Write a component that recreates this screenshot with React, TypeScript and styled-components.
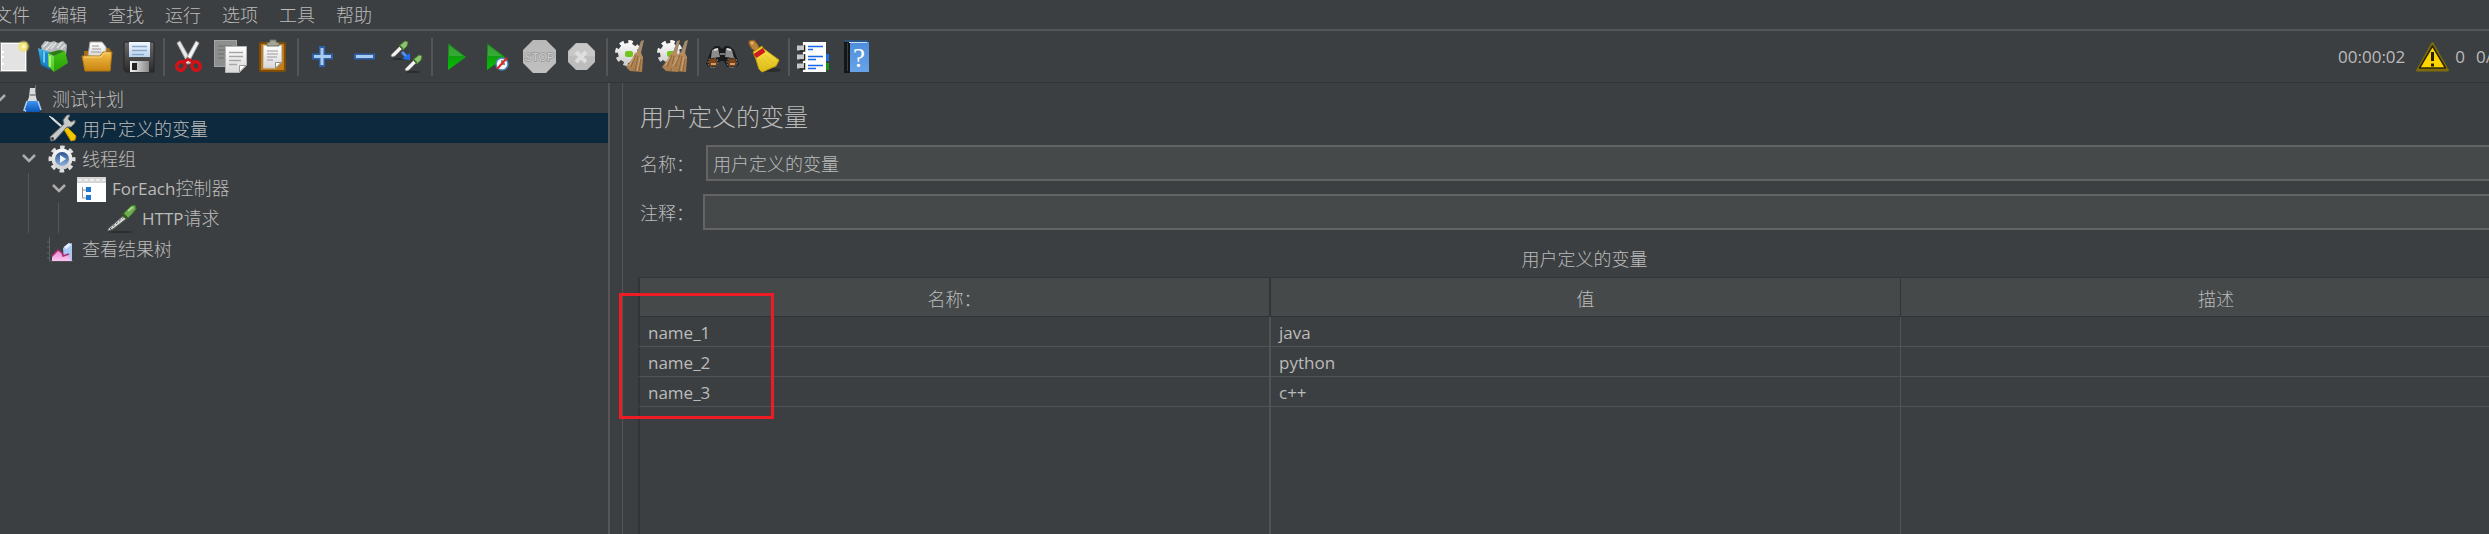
import React from "react";
import styled, { createGlobalStyle } from "styled-components";

const color = {
  bg: "#3c3f41",
  text: "#bbbbbb",
  line: "#555555",
  dark: "#323537",
  grid: "#515456",
  raised: "#45494a",
  field: "#646464",
  selected: "#0d293e",
  mark: "#ed1c24",
};

const GlobalStyle = createGlobalStyle`
  * { box-sizing: border-box; }
  body {
    margin: 0;
    background: ${color.bg};
    color: ${color.text};
    font-family: "Noto Sans CJK SC", sans-serif;
    font-size: 18px;
    font-weight: 300;
    line-height: 26px;
  }
  button, input { font: inherit; color: inherit; }
`;

const Window = styled.div`
  display: flex;
  flex-direction: column;
  min-height: 100vh;
  overflow: hidden;
`;

const MenuBar = styled.nav`
  display: flex;
  gap: 21px;
  height: 31px;
  margin-left: -6px;
  border-bottom: 2px solid ${color.line};
`;

const MenuButton = styled.button`
  padding: 0 0 2px;
  border: 0;
  background: none;
  white-space: nowrap;
`;

const ToolBar = styled.header`
  display: flex;
  align-items: center;
  height: 52px;
  margin-left: -8px;
  border-bottom: 1px solid ${color.dark};
`;

const ToolButton = styled.button`
  display: flex;
  flex: none;
  justify-content: center;
  width: 42px;
  height: 36px;
  padding: 0;
  border: 0;
  background: none;
`;

const Separator = styled.span<{ $narrow?: boolean }>`
  flex: none;
  width: 2px;
  height: 38px;
  margin: 0 ${(p) => (p.$narrow ? 2 : 3)}px;
  background: ${color.line};
`;

const Status = styled.div`
  display: flex;
  align-items: center;
  gap: 11px;
  margin: 0 -3px 0 auto;
  white-space: nowrap;
`;

const Warnings = styled.span`
  display: flex;
  align-items: center;
  gap: 6px;
`;

const Latin = styled.span`
  font-family: "Open Sans", "Noto Sans", sans-serif;
  font-size: 17px;
  font-weight: 400;
`;

const Workspace = styled.div`
  display: flex;
  flex: 1;
`;

const Tree = styled.ul`
  flex: none;
  width: 617px;
  margin: 0 0 0 -9px;
  padding: 0;
  list-style: none;
`;

const TreeRow = styled.li<{ $selected?: boolean }>`
  display: flex;
  align-items: center;
  height: 30px;
  background: ${(p) => (p.$selected ? color.selected : "none")};
  white-space: nowrap;
`;

const Indent = styled.span<{ $guide: boolean }>`
  width: 23px;
  height: 30px;
  margin-left: 7px;
  border-left: 1px solid ${(p) => (p.$guide ? color.line : "transparent")};
`;

const Twisty = styled.span`
  display: flex;
  justify-content: center;
  width: 16px;
  margin-right: 10px;
`;

const TreeIcon = styled.span`
  display: flex;
  width: 30px;
  margin-right: 5px;
`;

const Divider = styled.div`
  flex: none;
  width: 14px;
  border-left: 2px solid ${color.line};
`;

const Editor = styled.main`
  display: flex;
  flex: 1;
  flex-direction: column;
  min-width: 0;
  margin-right: -42px;
  padding: 15px 0 0 15px;
  border-left: 1px solid ${color.line};
`;

const Title = styled.h1`
  margin: 0 0 11px 2px;
  font-size: 24px;
  font-weight: 300;
  line-height: 36px;
`;

const Field = styled.div<{ $gap: number }>`
  display: flex;
  align-items: center;
  gap: ${(p) => p.$gap}px;
  margin: 0 0 13px 2px;
`;

const FieldLabel = styled.label`
  flex: none;
  width: 54px;
`;

const TextInput = styled.input`
  flex: 1;
  min-width: 0;
  height: 36px;
  padding: 0 5px;
  border: 2px solid ${color.field};
  border-radius: 0;
  outline: 0;
  background: ${color.raised};
`;

const TableCaption = styled.h2`
  margin: 2px 0 6px;
  font-size: 18px;
  font-weight: 300;
  line-height: 26px;
  text-align: center;
`;

const TableArea = styled.section`
  position: relative;
  display: grid;
  flex: 1;
`;

const Table = styled.table`
  width: 100%;
  height: 100%;
  border-collapse: separate;
  border-spacing: 0;
  table-layout: fixed;
`;

const HeadCell = styled.th`
  height: 40px;
  padding: 2px 0 0;
  border: solid ${color.dark};
  border-width: 1px 0 1px 2px;
  background: ${color.raised};
  font-weight: 300;

  &:last-child { border-left-width: 1px; }
`;

const Cell = styled.td`
  height: 30px;
  padding: 0 0 0 8px;
  border: solid ${color.grid};
  border-width: 0 0 1px 2px;
  line-height: 24px;

  &:first-child { border-left-color: ${color.dark}; }
  &:last-child { border-left-width: 1px; }
`;

const FillCell = styled(Cell)`
  height: auto;
  border-bottom: 0;
`;

const Highlight = styled.div`
  position: absolute;
  top: 16px;
  left: -19px;
  width: 155px;
  height: 126px;
  border: 3px solid ${color.mark};
  pointer-events: none;
`;

const DefsHolder = styled.svg`
  position: absolute;
`;

const Gradient = ({ id, from, to, flat }: { id: string; from: string; to: string; flat?: boolean }) => (
  <linearGradient id={id} x1="0" y1="0" x2={flat ? 1 : 0} y2={flat ? 0 : 1}>
    <stop offset="0" stopColor={from} />
    <stop offset="1" stopColor={to} />
  </linearGradient>
);

const IconDefs = () => (
  <DefsHolder width="0" height="0" aria-hidden>
    <defs>
      <Gradient id="paper" from="#ffffff" to="#d8d8d8" />
      <Gradient id="folder" from="#f3c04a" to="#c98310" />
      <Gradient id="blueBox" from="#3cb4ec" to="#0a64a8" />
      <Gradient id="greenBox" from="#3fc414" to="#2c9c06" />
      <Gradient id="greenSide" from="#7de35a" to="#4bc41c" />
      <Gradient id="floppy" from="#6a6a6a" to="#2a2a2a" />
      <Gradient id="sky" from="#f2f8ff" to="#b9d3ee" />
      <Gradient id="metal" from="#f4f4f4" to="#888888" flat />
      <Gradient id="play" from="#1d7a1d" to="#00c400" />
      <Gradient id="grey" from="#b8b8b8" to="#c0c0c0" />
      <Gradient id="gear" from="#fafafa" to="#cfcfcf" />
      <Gradient id="straw" from="#b98d5e" to="#a87c4d" />
      <Gradient id="yellow" from="#f8e34c" to="#dcb910" />
      <Gradient id="book" from="#4d8ddb" to="#68a3e8" />
      <Gradient id="liquid" from="#3f93ee" to="#0a56b8" />
      <Gradient id="lens" from="#2d528f" to="#8fb2de" />
      <Gradient id="pink" from="#e58bd0" to="#fbc4f2" />
      <radialGradient id="glow">
        <stop offset="0" stopColor="#fffde0" />
        <stop offset="0.5" stopColor="#f3e36a" />
        <stop offset="1" stopColor="#f3e36a" stopOpacity="0" />
      </radialGradient>
    </defs>
  </DefsHolder>
);

const Svg = ({ size = 36, children }: { size?: number; children: React.ReactNode }) => (
  <svg width={size} height={size} viewBox={`0 0 ${size} ${size}`} fill="none" aria-hidden>
    {children}
  </svg>
);

const NewIcon = () => (
  <Svg>
    <rect x="5.5" y="3.5" width="26" height="29" fill="#fff" stroke="#8b8b88" />
    <rect x="7" y="5" width="23" height="26" fill="#e3e3e3" />
    <path d="M7 13h2M7 18h2M7 25h2" stroke="#fff" strokeWidth="2" />
    <circle cx="28.500" cy="7.500" r="6.500" fill="url(#glow)" />
  </Svg>
);

const TemplatesIcon = () => (
  <Svg>
    <path d="M4 7 8 2l6 1 3-1 4 2 5-2 4 4-1 10-12 3L5 13z" fill="#b4b8b9" />
    <path d="m6 8 5-5M9 11l7-7M14 10l5-6M20 9l5-6M24 10l4-4" stroke="#e2e4e4" strokeWidth="1.500" />
    <path d="M1 9l5 2 7 2v18l-9-5z" fill="url(#blueBox)" />
    <path d="M5 12l7 3v13l-6-3z" fill="#1e86ca" />
    <path d="m6 12 2 1v11l-2-1z" fill="#6acbf4" />
    <path d="m11 14 6 3v16l-6-6z" fill="url(#greenSide)" />
    <path d="m17 17 11-5 3 12-14 9z" fill="url(#greenBox)" />
    <path d="m11 14 11-3 6 1-11 5z" fill="#2d7d14" />
    <path d="M13 17v11" stroke="#a6f088" strokeWidth="2" />
  </Svg>
);

const OpenIcon = () => (
  <Svg>
    <path d="M5 12h5l1-3h19l2 3v19H5z" fill="#a86c10" />
    <path d="m9 17 2-14h12l4 5v10z" fill="url(#paper)" stroke="#a9a9a9" />
    <path d="M13 7h7M13 10h9M12 13h10" stroke="#999" />
    <path d="M3 17h18l3-4h9l-2 19H6z" fill="url(#folder)" stroke="#b3770f" />
    <path d="M5 18h17l3-4h6" stroke="#fbd983" />
  </Svg>
);

const SaveIcon = () => (
  <Svg>
    <path d="M4 3h28l1 1v29H5l-2-2V4z" fill="url(#floppy)" stroke="#252525" />
    <path d="M8 3h21v15H8z" fill="url(#sky)" />
    <path d="M11 7.500h15M11 11.500h15M11 15.500h12" stroke="#8aa9c9" strokeWidth="1.500" />
    <rect x="9" y="22" width="19" height="11" fill="url(#metal)" />
    <rect x="11" y="24" width="5" height="7" fill="#222" />
  </Svg>
);

const CutIcon = () => (
  <Svg>
    <path d="M6 4 9 2l9 16 2 6-3 1z" fill="#e9e9e9" stroke="#a4a4a4" />
    <path d="m28 4-3-2-9 16-2 6 3 1z" fill="#f4f4f4" stroke="#a4a4a4" />
    <ellipse cx="10" cy="27" rx="4" ry="4.500" stroke="#d31217" strokeWidth="3.500" transform="rotate(35 10 27)" />
    <ellipse cx="25" cy="27" rx="4" ry="4.500" stroke="#d31217" strokeWidth="3.500" transform="rotate(-35 25 27)" />
    <path d="m13 23 4-3 5 3" stroke="#d31217" strokeWidth="3" />
    <circle cx="17" cy="19" r="1" fill="#777" />
  </Svg>
);

const CopyIcon = () => (
  <Svg>
    <rect x="1.500" y="1.500" width="22" height="26" fill="#8d8f8f" stroke="#a5a5a5" />
    <path d="M5 7h14M5 11h9M5 15h6M5 19h6" stroke="#6d6f6f" />
    <path d="M12.500 7.500h21V26l-7 7.500h-14z" fill="url(#paper)" stroke="#b5b5b5" />
    <path d="M16 13.500h14M16 17.500h14M16 21.500h12M16 25.500h8" stroke="#a6a6a6" strokeWidth="1.500" />
    <path d="M26.500 33v-6.500H33z" fill="#fff" stroke="#999" />
  </Svg>
);

const PasteIcon = () => (
  <Svg>
    <rect x="5" y="4" width="25" height="28" rx="1" fill="#c07f1c" stroke="#7d4c08" strokeWidth="2" />
    <path d="M8.500 6.500h18V23l-6 6h-12z" fill="url(#paper)" stroke="#c8c8c8" />
    <path d="M12 12h11M12 15h11M12 18h10M12 21h6" stroke="#999" />
    <path d="M20.500 29v-5.500H26z" fill="#fff" stroke="#8c8c8c" />
    <path d="M12 7V4l3-1V1h6v2l3 1v3z" fill="#a4a596" stroke="#6f705f" />
  </Svg>
);

const PlusIcon = () => (
  <Svg>
    <path d="M17 7v21M7 17.500h21" stroke="#2c62ac" strokeWidth="6" />
    <path d="M17 9v17M9 17.500h17" stroke="#a9cbee" strokeWidth="3" />
  </Svg>
);

const MinusIcon = () => (
  <Svg>
    <path d="M7 17.500h21" stroke="#2c62ac" strokeWidth="6" />
    <path d="M9 17.500h17" stroke="#a9cbee" strokeWidth="3" />
  </Svg>
);

const Dropper = () => (
  <>
    <path d="m1 16 9-9 3 2-8 8-3 1z" fill="#f2f2ee" stroke="#8f918f" strokeWidth="0.800" />
    <path d="m9 7 6-5 3 1-1 4-4 4z" fill="#8cc472" stroke="#47802f" strokeWidth="0.800" />
    <path d="m9 6 4 4" stroke="#3e6b2a" strokeWidth="1.500" />
  </>
);

const ToggleIcon = () => (
  <Svg>
    <ellipse cx="10" cy="20" rx="7" ry="1" fill="#292b2c" />
    <g transform="translate(1 0)"><Dropper /></g>
    <ellipse cx="24" cy="33" rx="7" ry="1" fill="#292b2c" />
    <g transform="translate(15 14)"><Dropper /></g>
    <path d="m13 13 5 5" stroke="#4d8df5" strokeWidth="3" />
    <path d="m21 14 0 7-8-1z" fill="#1f6fef" />
  </Svg>
);

const PlayIcon = () => (
  <Svg>
    <path d="M9 4v27l18-13z" fill="url(#play)" />
    <path d="M10 6v11l14 0z" fill="#5cb85c" opacity="0.500" />
  </Svg>
);

const PlayNoPauseIcon = () => (
  <Svg>
    <path d="M6 4v27l18-13z" fill="url(#play)" />
    <path d="M7 6v11l14 0z" fill="#5cb85c" opacity="0.500" />
    <circle cx="21" cy="25" r="6" fill="#f5f5f5" stroke="#4a86bd" strokeWidth="1.500" />
    <path d="M21 21v4h3" stroke="#222" />
    <path d="m16 30 10-11" stroke="#e02626" strokeWidth="2" />
  </Svg>
);

const StopIcon = () => (
  <Svg>
    <path d="M10 1h13l10 10v13L23 34H10L0 24V11z" fill="url(#grey)" />
    <text x="16.500" y="22" textAnchor="middle" fontFamily="Liberation Sans, sans-serif" fontSize="11" fill="#d0d0d0" stroke="#9a9a9a" strokeWidth="1.500" paintOrder="stroke">
      STOP
    </text>
  </Svg>
);

const ShutdownIcon = () => (
  <Svg>
    <path d="M11 4h11l8 8v11l-8 8H11l-8-8V12z" fill="#bdbdbd" />
    <path d="M11 5h11l8 8v4H4v-4z" fill="#c8c8c8" />
    <path d="m11 13 10 10M21 13 11 23" stroke="#dedede" strokeWidth="4" />
  </Svg>
);

const Cog = () => (
  <>
    <circle cx="15" cy="14" r="11" stroke="url(#gear)" strokeWidth="4" strokeDasharray="4.300 4.340" />
    <circle cx="15" cy="14" r="10" fill="url(#gear)" />
    <rect x="12" y="12" width="8" height="6" rx="2" fill="#72c51c" />
  </>
);

const Brush = ({ x }: { x: number }) => (
  <g transform={`translate(${x} 0)`}>
    <path d="m22 2 3-1-3 13-4-1z" fill="#a58a6b" />
    <path d="m16 14 5-2 3 6-1 15-12-1-4-4 6-8z" fill="url(#straw)" />
    <path d="m17 16-5 12M19 17l-3 15M22 20l-2 12" stroke="#8c6538" />
    <path d="m15 18-5 9M21 18l-3 14" stroke="#cda677" />
  </g>
);

const ClearIcon = () => (
  <Svg>
    <Cog />
    <Brush x={6} />
  </Svg>
);

const ClearAllIcon = () => (
  <Svg>
    <Cog />
    <Brush x={0} />
    <Brush x={8} />
  </Svg>
);

const SearchIcon = () => (
  <Svg>
    <path d="M1 25 6 11l4-4h4l3 3 3-3h4l5 4 5 14-3 3h-9l-3-6h-4l-3 6H4z" fill="#1a1a1a" />
    <path d="m7 11 6-2 2 9-9 1zM21 9l6 2 2 8-9-1z" fill="#8b8d8e" />
    <path d="m9 11 4-1M22 10l4 1" stroke="#dcdcdc" strokeWidth="2" />
    <path d="M15 15h5" stroke="#777" strokeWidth="2" />
    <circle cx="8" cy="23.500" r="5" stroke="#8e8e8e" strokeDasharray="2 1" />
    <circle cx="27" cy="23.500" r="5" stroke="#8e8e8e" strokeDasharray="2 1" />
    <circle cx="8" cy="23.500" r="4" fill="#7c4419" />
    <circle cx="27" cy="23.500" r="4" fill="#7c4419" />
    <path d="M6 25h5M25 25h5" stroke="#d09a68" strokeWidth="2" />
  </Svg>
);

const BroomIcon = () => (
  <Svg>
    <ellipse cx="25" cy="31" rx="9" ry="2" fill="#2b2d2e" />
    <path d="m2 2 5-1 4 5 2 6-3 1-5-3-3-5z" fill="#b9853a" stroke="#8a5c1d" />
    <circle cx="5" cy="4" r="1.500" fill="#e7b569" />
    <path d="m6 13 9-6 2 4-9 7z" fill="#ecd535" stroke="#b3940d" />
    <path d="m8 17 9-7 15 11-3 6-14 6-3-3z" fill="url(#yellow)" stroke="#c3a112" />
    <path d="m12 20 6 12M15 18l8 11M18 16l10 10" stroke="#e0c228" />
    <path d="m8 17 9-6" stroke="#d01c1c" strokeWidth="5" />
  </Svg>
);

const FunctionIcon = () => (
  <Svg>
    <rect x="27" y="15" width="7" height="7" fill="#1c6fe0" />
    <rect x="27" y="24" width="7" height="7" fill="#159415" />
    <path d="M7 3h24v30H7z" fill="#fdfdfd" />
    <path d="M7.500 3v30" stroke="#4a4c4d" />
    <path d="M2 9h6M2 18h6M2 27h6" stroke="#c4c7c9" strokeWidth="5" />
    <path d="M9.500 6v6h-5M9.500 15v6h-5M9.500 24v6h-5" stroke="#222" strokeWidth="1.500" />
    <path d="M13 7.500h15M13 17.500h15M13 26.500h15M13 10.500h5M13 20.500h8M13 29.500h8" stroke="#1767e8" strokeWidth="1.500" />
  </Svg>
);

const HelpIcon = () => (
  <Svg>
    <path d="M12 3h20v30H12z" fill="url(#book)" />
    <path d="M7 3h6v31H7z" fill="#141516" />
    <path d="M10.500 4v28" stroke="#3a3d40" />
    <path d="M8 2h23" stroke="#29527f" strokeWidth="2" />
    <path d="M12 3.500h18" stroke="#c9dcf2" />
    <text x="22" y="28" textAnchor="middle" fontFamily="Liberation Serif, serif" fontSize="27" fill="#ffffff">
      ?
    </text>
  </Svg>
);

const WarningIcon = () => (
  <svg width="33" height="30" viewBox="0 0 33 30" fill="none" aria-hidden>
    <path d="M16.500 1 32 28.500H1z" fill="#7c6c0c" stroke="#7c6c0c" strokeWidth="2" strokeLinejoin="round" />
    <path d="M16.500 4 29.500 26H3.500z" fill="#fdd400" stroke="#2b260b" strokeWidth="1.500" strokeLinejoin="round" />
    <path d="M16.500 10v9M16.500 21.500v3" stroke="#221d05" strokeWidth="3" />
  </svg>
);

const FlaskIcon = () => (
  <Svg size={30}>
    <path d="M18.500 2v5" stroke="#777" />
    <ellipse cx="16" cy="29" rx="9" ry="1" fill="#292b2c" />
    <path d="M13 5h5l1 9 4 13-2 2H9l-2-2 5-13z" fill="#d9dcde" />
    <path d="m10 18 11 0 3 9-2 2H9l-2-2z" fill="url(#liquid)" />
    <path d="m10 18-3 9 2 1M21 18l3 9" stroke="#a8cdf2" strokeWidth="1.500" />
    <path d="M13 12h6" stroke="#929697" strokeWidth="2" />
  </Svg>
);

const ToolsIcon = () => (
  <Svg size={30}>
    <path d="m2 3 4 2 9 8-1 1L5 6z" fill="#eee" stroke="#cfcfcf" />
    <path d="m16 15 3-2 10 10-1 4-4 1z" fill="#f3c600" stroke="#b58e00" />
    <path d="m3 24 14-13-1-4 4-5 3 0-2 4 3 3 4-2 0 3-4 4-4 0L8 27l-4 1z" fill="#c7c9c9" stroke="#66696a" />
    <circle cx="5.500" cy="25.500" r="1.500" fill="#3b3e40" />
  </Svg>
);

const ThreadGroupIcon = () => (
  <Svg size={30}>
    <circle cx="15" cy="16" r="11.500" stroke="#dedede" strokeWidth="4" strokeDasharray="4.520 4.510" strokeDashoffset="2.260" />
    <circle cx="15" cy="16" r="10.500" fill="url(#gear)" />
    <circle cx="15" cy="16" r="7" fill="url(#lens)" />
    <path d="M13 12v8l6-4z" fill="#eaf1fa" />
  </Svg>
);

const ControllerIcon = () => (
  <Svg size={30}>
    <path d="M0 4h29v25H0z" fill="#fff" />
    <path d="M0 4h29v6H0z" fill="#d5d5d5" />
    <path d="M1 7h27" stroke="#eee" strokeWidth="2" strokeDasharray="4 2" />
    <path d="M5.500 14v11h4M5.500 17h4" stroke="#8e9296" />
    <rect x="9" y="14" width="5" height="5" fill="#1c78cc" />
    <rect x="9" y="22" width="5" height="5" fill="#1c78cc" />
  </Svg>
);

const SamplerIcon = () => (
  <Svg size={30}>
    <ellipse cx="14" cy="29" rx="12" ry="1" fill="#2b2d2e" />
    <path d="m1 26 15-13 3 3L6 26l-5 2z" fill="#d6d8d2" stroke="#5f6261" />
    <path d="m3 26 14-12" stroke="#4a4d4c" strokeDasharray="2 2" />
    <path d="m16 11 8-8 4-1 1 4-4 5-5 5z" fill="#6faa52" stroke="#3f7a2a" />
    <path d="m21 8 5-4" stroke="#a7d68d" strokeWidth="2" />
    <path d="m15 10 6 6" stroke="#2f5c1f" strokeWidth="2" />
  </Svg>
);

const ResultsIcon = () => (
  <Svg size={30}>
    <path d="M2.500 4v24H26M0 9h3M0 14h3M0 20h3M0 25h3" stroke="#5d6062" />
    <path d="m17 28-1-13 5-4 4-1v18z" fill="#a9c9f5" />
    <path d="M18 15l5-4" stroke="#e4f0ff" strokeWidth="3" />
    <path d="M5 28v-4l6-7 4 3 1 3 6-1 2 6z" fill="url(#pink)" />
    <path d="m5 23 6-6 4 3 1 3 6-2" stroke="#b02a74" strokeWidth="1.500" />
  </Svg>
);

const Chevron = () => (
  <svg width="16" height="12" viewBox="0 0 16 12" fill="none" aria-hidden>
    <path d="m2 3 6 6 6-6" stroke="#adadad" strokeWidth="2.500" />
  </svg>
);

type Tool = { label: string; icon: React.FC };

const toolGroups: { tools: Tool[]; narrow?: boolean }[] = [
  {
    tools: [
      { label: "新建", icon: NewIcon },
      { label: "模板", icon: TemplatesIcon },
      { label: "打开", icon: OpenIcon },
      { label: "保存", icon: SaveIcon },
    ],
  },
  {
    tools: [
      { label: "剪切", icon: CutIcon },
      { label: "复制", icon: CopyIcon },
      { label: "粘贴", icon: PasteIcon },
    ],
  },
  {
    tools: [
      { label: "展开", icon: PlusIcon },
      { label: "折叠", icon: MinusIcon },
      { label: "切换", icon: ToggleIcon },
    ],
  },
  {
    narrow: true,
    tools: [
      { label: "启动", icon: PlayIcon },
      { label: "不停顿启动", icon: PlayNoPauseIcon },
      { label: "停止", icon: StopIcon },
      { label: "关闭", icon: ShutdownIcon },
    ],
  },
  {
    tools: [
      { label: "清除", icon: ClearIcon },
      { label: "清除全部", icon: ClearAllIcon },
    ],
  },
  {
    narrow: true,
    tools: [
      { label: "搜索", icon: SearchIcon },
      { label: "重置搜索", icon: BroomIcon },
    ],
  },
  {
    tools: [
      { label: "函数助手", icon: FunctionIcon },
      { label: "帮助文档", icon: HelpIcon },
    ],
  },
];

type Node = { level: number; icon: React.FC; latin?: string; name: string; open?: boolean; selected?: boolean };

const nodes: Node[] = [
  { level: 0, icon: FlaskIcon, name: "测试计划", open: true },
  { level: 1, icon: ToolsIcon, name: "用户定义的变量", selected: true },
  { level: 1, icon: ThreadGroupIcon, name: "线程组", open: true },
  { level: 2, icon: ControllerIcon, latin: "ForEach", name: "控制器", open: true },
  { level: 3, icon: SamplerIcon, latin: "HTTP", name: "请求" },
  { level: 1, icon: ResultsIcon, name: "查看结果树" },
];

const menus = ["文件", "编辑", "查找", "运行", "选项", "工具", "帮助"];

const variables = [
  { name: "name_1", value: "java" },
  { name: "name_2", value: "python" },
  { name: "name_3", value: "c++" },
];

export default function App() {
  return (
    <Window>
      <GlobalStyle />
      <IconDefs />
      <MenuBar>
        {menus.map((menu) => (
          <MenuButton key={menu} type="button">{menu}</MenuButton>
        ))}
      </MenuBar>
      <ToolBar>
        {toolGroups.map((group, i) => (
          <React.Fragment key={group.tools[0].label}>
            {group.tools.map(({ label, icon: Icon }) => (
              <ToolButton key={label} type="button" aria-label={label}>
                <Icon />
              </ToolButton>
            ))}
            {i < toolGroups.length - 1 && <Separator $narrow={group.narrow} />}
          </React.Fragment>
        ))}
        <Status>
          <Latin>00:00:02</Latin>
          <Warnings>
            <WarningIcon />
            <Latin>0</Latin>
          </Warnings>
          <Latin>0/</Latin>
        </Status>
      </ToolBar>
      <Workspace>
        <Tree role="tree">
          {nodes.map(({ level, icon: Icon, latin, name, open, selected }) => (
            <TreeRow key={name} role="treeitem" aria-level={level + 1} aria-expanded={open} aria-selected={!!selected} $selected={selected}>
              {Array.from({ length: level }, (_, i) => (
                <Indent key={i} $guide={i > 0} />
              ))}
              <Twisty>{open && <Chevron />}</Twisty>
              <TreeIcon><Icon /></TreeIcon>
              <span>
                {latin && <Latin>{latin}</Latin>}
                {name}
              </span>
            </TreeRow>
          ))}
        </Tree>
        <Divider />
        <Editor>
          <Title>用户定义的变量</Title>
          <Field $gap={12}>
            <FieldLabel htmlFor="name">名称：</FieldLabel>
            <TextInput id="name" defaultValue="用户定义的变量" />
          </Field>
          <Field $gap={9}>
            <FieldLabel htmlFor="comment">注释：</FieldLabel>
            <TextInput id="comment" />
          </Field>
          <TableCaption id="variables">用户定义的变量</TableCaption>
          <TableArea>
            <Table aria-labelledby="variables">
              <thead>
                <tr>
                  <HeadCell>名称：</HeadCell>
                  <HeadCell>值</HeadCell>
                  <HeadCell>描述</HeadCell>
                </tr>
              </thead>
              <tbody>
                {variables.map(({ name, value }) => (
                  <tr key={name}>
                    <Cell><Latin>{name}</Latin></Cell>
                    <Cell><Latin>{value}</Latin></Cell>
                    <Cell />
                  </tr>
                ))}
                <tr aria-hidden>
                  <FillCell />
                  <FillCell />
                  <FillCell />
                </tr>
              </tbody>
            </Table>
            <Highlight />
          </TableArea>
        </Editor>
      </Workspace>
    </Window>
  );
}
